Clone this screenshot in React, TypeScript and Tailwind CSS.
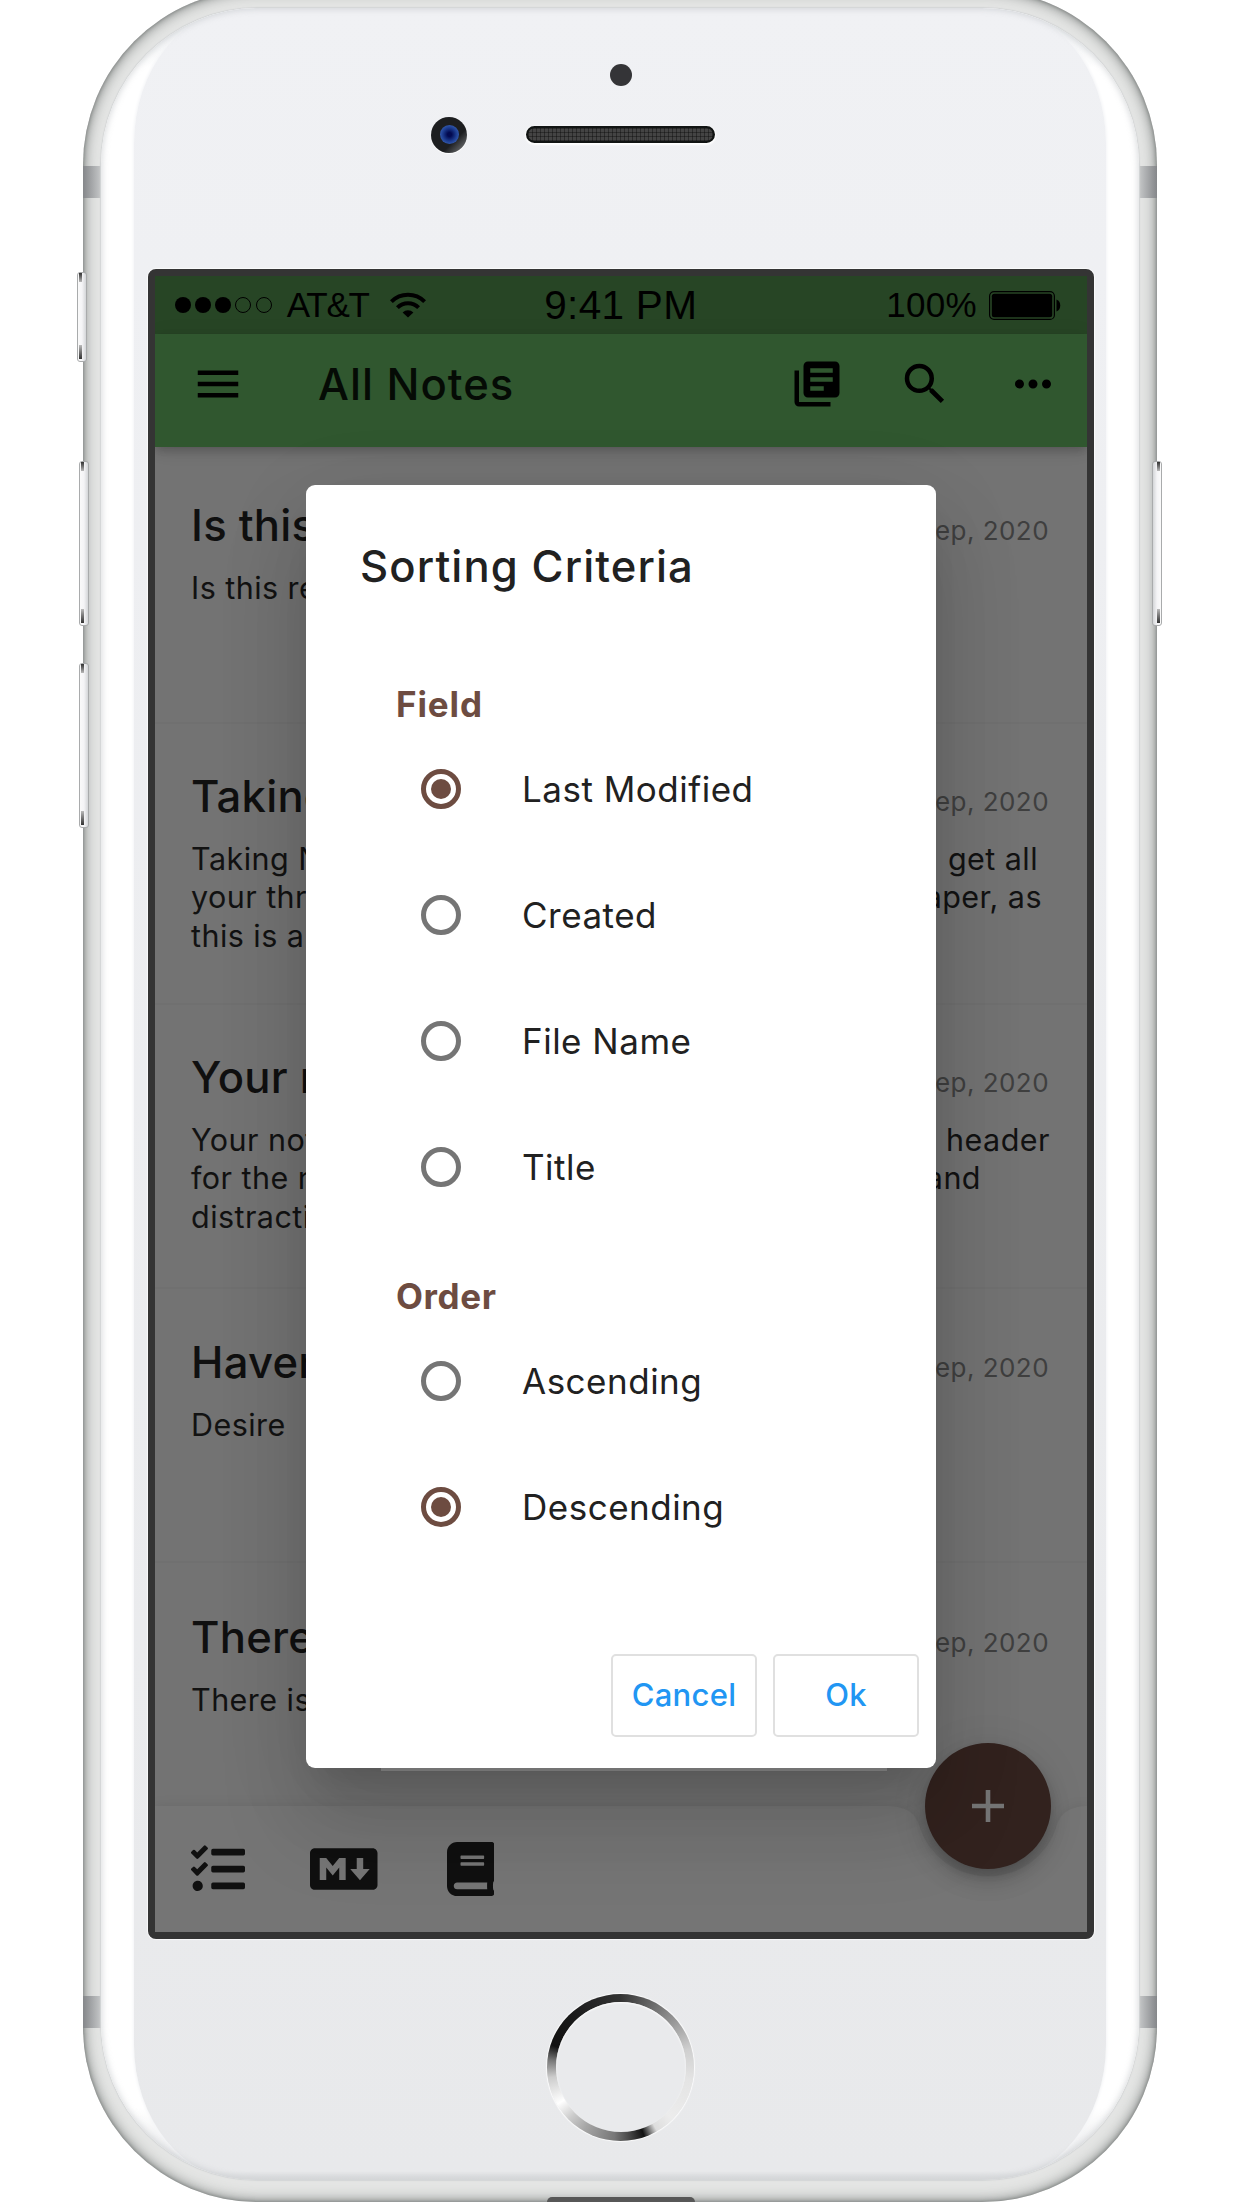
import React from "react";
import { FaBook, FaMarkdown, FaTasks } from "react-icons/fa";
import { MdLibraryBooks, MdMenu, MdMoreHoriz, MdSearch } from "react-icons/md";

type Line = { left: string; right?: string; pad?: string };
type Note = { title: string; lines: Line[]; box: string };

const notes: Note[] = [
  { title: "Is this real?", lines: [{ left: "Is this real?" }], box: "h-[275px] pt-[52px]" },
  {
    title: "Taking Notes",
    lines: [
      { left: "Taking Notes", right: "get all", pad: "pr-[12px]" },
      { left: "your thread", right: "paper, as", pad: "pr-[8px]" },
      { left: "this is a" },
    ],
    box: "h-[281px] border-t-2 border-[#707070] pt-[46px]",
  },
  {
    title: "Your notes",
    lines: [
      { left: "Your notes", right: "header", pad: "pr-0" },
      { left: "for the note", right: "and", pad: "pr-[69px]" },
      { left: "distraction" },
    ],
    box: "h-[284px] border-t-2 border-[#707070] pt-[46px]",
  },
  { title: "Haven", lines: [{ left: "Desire" }], box: "h-[274px] border-t-2 border-[#707070] pt-[47px]" },
  { title: "There is", lines: [{ left: "There is" }], box: "h-[245px] border-t-2 border-[#707070] pt-[48px]" },
];

function NoteRow({ note }: { note: Note }) {
  return (
    <div className={`${note.box} w-full shrink-0 pl-[36px] pr-[37px]`}>
      <div className="flex justify-between">
        <div className="text-[43.6px] leading-[54px] font-medium tracking-[0.25px] text-[#101010]">{note.title}</div>
        <div className="pt-[5px] pr-px text-[26px] leading-[54px] tracking-[0.45px] text-[#3f3f3f]">18 Sep, 2020</div>
      </div>
      <div className="mt-[11px] text-[30.5px] leading-[38.3px] tracking-[0.45px] text-[#121212]">
        {note.lines.map((l) => (
          <div key={l.left} className="flex justify-between">
            <span>{l.left}</span>
            {l.right && <span className={l.pad}>{l.right}</span>}
          </div>
        ))}
      </div>
    </div>
  );
}

function StatusBar() {
  return (
    <div className="flex h-[58px] shrink-0 items-center bg-[#274525] pl-[19.5px] pr-[26px] font-['Liberation_Sans',sans-serif] text-black">
      <div className="flex flex-1 items-center">
        <div className="flex gap-[4.3px]">
          <i className="size-4 rounded-full bg-black" />
          <i className="size-4 rounded-full bg-black" />
          <i className="size-4 rounded-full bg-black" />
          <i className="size-4 rounded-full border border-black" />
          <i className="size-4 rounded-full border border-black" />
        </div>
        <span className="ml-[15px] text-[35px] leading-[58px] tracking-[-1.2px]">AT&amp;T</span>
        <svg className="ml-[21px] h-[26px] w-[36px]" viewBox="0 0 36 26" fill="none" stroke="#000" strokeWidth="4">
          <path d="M1.4 9.6a23.5 23.5 0 0 1 33.2 0" />
          <path d="M7.4 15.6a15 15 0 0 1 21.2 0" />
          <path d="M18 25.6l-5.4-5.2a7.8 7.8 0 0 1 10.8 0z" fill="#000" stroke="none" />
        </svg>
      </div>
      <span className="relative left-[3px] text-[40.5px] leading-[58px] tracking-[0.3px]">9:41 PM</span>
      <div className="flex flex-1 items-center justify-end">
        <span className="text-[35px] leading-[58px] tracking-[0.3px]">100%</span>
        <svg className="ml-[12px] h-[29px] w-[72px]" viewBox="0 0 72 29">
          <rect x="0.6" y="0.6" width="64.8" height="27.8" rx="4.5" fill="none" stroke="#000" strokeWidth="1.2" />
          <rect x="2.8" y="2.8" width="60.4" height="23.4" rx="2.5" />
          <path d="M67.5 8.5c5 1.5 5 10.500 0 12z" />
        </svg>
      </div>
    </div>
  );
}

function Toolbar() {
  return (
    <div className="relative z-10 flex h-[113px] shrink-0 items-center bg-[#30572f] pb-[13px] pl-[36px] pr-[27px] shadow-[0_5px_10px_rgba(0,0,0,0.12),0_2px_22px_rgba(0,0,0,0.06),0_4px_8px_-2px_rgba(0,0,0,0.1)]">
      <MdMenu className="size-[54px] text-black" />
      <span className="ml-[73px] flex-1 pt-px text-[43.6px] leading-[54px] font-[450] tracking-[1px] text-[#050b05]">All Notes</span>
      <div className="flex gap-[54px] text-black">
        <MdLibraryBooks className="size-[54px]" />
        <MdSearch className="size-[54px]" />
        <MdMoreHoriz className="size-[54px]" />
      </div>
    </div>
  );
}

function BottomBar() {
  return (
    <div className="relative mt-auto h-[127px] shrink-0">
      <svg className="absolute inset-0 h-full w-full drop-shadow-[0_0_6px_rgba(0,0,0,0.08)]" viewBox="0 0 932 127" preserveAspectRatio="none">
        <path d="M0 1H733C752 2 760 8 764 20A72 72 0 0 0 902 20C906 8 914 2 932 1V127H0z" fill="#757575" />
      </svg>
      <div className="relative flex h-full items-center pl-[36px] text-[#101010]">
        <FaTasks className="size-[54px]" />
        <FaMarkdown className="ml-[65px] h-[54px] w-[67.500px]" />
        <FaBook className="ml-[69.500px] h-[54px] w-[47.250px]" />
      </div>
      <div className="absolute left-[770px] -top-[62px] flex size-[126px] items-center justify-center rounded-full bg-[#32221e] shadow-[0_7px_12px_-2px_rgba(0,0,0,0.2),0_13px_22px_rgba(0,0,0,0.14),0_2px_40px_rgba(0,0,0,0.08)]">
        <svg className="size-8" viewBox="0 0 32 32" stroke="#757575" strokeWidth="4.600">
          <path d="M16 0V32M0 16H32" />
        </svg>
      </div>
    </div>
  );
}

function RadioRow({ label, checked = false }: { label: string; checked?: boolean }) {
  return (
    <div className="flex h-[126px] items-center pl-[115px]">
      <span
        className={`flex size-[40px] items-center justify-center rounded-full border-[5px] ${checked ? "border-[#6d4c41]" : "border-[#757575]"}`}
      >
        {checked && <span className="size-[20px] rounded-full bg-[#6d4c41]" />}
      </span>
      <span className="ml-[61px] text-[35px] leading-[44px] tracking-[0.5px] text-[#212121]">{label}</span>
    </div>
  );
}

function SortDialog() {
  return (
    <div className="absolute left-[151px] top-[209px] z-20 h-[1283px] w-[630px] rounded-[9px] bg-white pt-[55px] shadow-[0_25px_34px_-16px_rgba(0,0,0,0.12),0_54px_86px_7px_rgba(0,0,0,0.12),0_20px_90px_6px_rgba(0,0,0,0.07)]">
      <h2 className="pl-[54px] text-[43.6px] leading-[54px] font-[450] tracking-[1.1px] text-[#212121]">Sorting Criteria</h2>
      <h3 className="mt-[88px] pl-[90px] text-[35px] leading-[44px] font-bold tracking-[0.9px] text-[#6d4c41]">Field</h3>
      <RadioRow label="Last Modified" checked />
      <RadioRow label="Created" />
      <RadioRow label="File Name" />
      <RadioRow label="Title" />
      <h3 className="mt-[44px] pl-[90px] text-[35px] leading-[44px] font-bold tracking-[0.6px] text-[#6d4c41]">Order</h3>
      <RadioRow label="Ascending" />
      <RadioRow label="Descending" checked />
      <div className="mt-[84px] flex justify-end gap-4 pr-[17px] text-[31px] font-medium tracking-[0.3px] text-[#2196f3]">
        <button className="h-[83px] w-[146px] rounded-[5px] border-2 border-[#e0e0e0]">Cancel</button>
        <button className="h-[83px] w-[146px] rounded-[5px] border-2 border-[#e0e0e0]">Ok</button>
      </div>
      <div className="absolute left-[75px] top-full h-[3px] w-[506px] bg-[#737373]" />
    </div>
  );
}

function Screen() {
  return (
    <div className="ml-[47px] mt-[116px] h-[1670px] w-[946px] shrink-0 rounded-[8px] border-[7px] border-[#343434] shadow-[0_0_1px_1px_rgba(255,255,255,0.7)]">
      <div className="relative flex h-full flex-col overflow-hidden bg-[#737373]">
        <StatusBar />
        <Toolbar />
        <div className="flex h-[1358px] shrink-0 flex-col overflow-hidden">
          {notes.map((n) => (
            <NoteRow key={n.title} note={n} />
          ))}
        </div>
        <BottomBar />
        <SortDialog />
      </div>
    </div>
  );
}

function SideButton({ place }: { place: string }) {
  return (
    <div
      className={`absolute rounded-[3px] border border-[#a9abac] bg-linear-to-r from-[#fafafa] via-[#f4f4f6] to-[#d4d6d8] ${place}`}
    >
      <div className="mx-[1px] h-[9px] w-[3px] bg-linear-to-b from-[#333] to-[#bbb]" />
      <div className="absolute bottom-[2px] left-[1px] h-[14px] w-[3px] bg-linear-to-b from-[#bbb] to-[#333]" />
    </div>
  );
}

export default function App() {
  return (
    <div className="relative h-[2208px] w-[1242px] overflow-hidden bg-white font-['Inter',sans-serif]">
      <div className="relative -mt-[10px] ml-[83px] h-[2212px] w-[1074px] overflow-hidden rounded-[175px] bg-[#e4e5e4] px-[18px] pb-[22px] pt-[18px] shadow-[inset_0_0_4px_rgba(70,75,73,0.6),inset_0_0_12px_3px_rgba(80,85,83,0.5)]">
        <div className="absolute left-0 top-[176px] h-[32px] w-[18px] bg-linear-to-r from-[#85878a] to-[#c6c8c9]" />
        <div className="absolute right-0 top-[176px] h-[32px] w-[18px] bg-linear-to-l from-[#85878a] to-[#c6c8c9]" />
        <div className="absolute left-0 top-[2006px] h-[32px] w-[18px] bg-linear-to-r from-[#85878a] to-[#c6c8c9]" />
        <div className="absolute right-0 top-[2006px] h-[32px] w-[18px] bg-linear-to-l from-[#85878a] to-[#c6c8c9]" />

        <div className="relative h-full w-full overflow-hidden rounded-[157px] bg-[linear-gradient(to_bottom,#eceef0_0px,#eff1f3_22px,#ffffff_60px,#ffffff_2100px,#e8e9eb_2155px,#d6d8da_2172px)] shadow-[0_0_1px_1px_#d3d5d6]">
          <div className="absolute inset-x-[33px] inset-y-0 rounded-[110px/135px] bg-linear-to-b from-[#f0f1f4] to-[#e8e9eb] shadow-[0_0_3px_1px_#f4f5f7]" />
          <div className="absolute inset-0 rounded-[157px] shadow-[inset_0_0_6px_1px_rgba(170,175,180,0.45)]" />
          <div className="absolute inset-x-[90px] bottom-0 h-[9px] bg-linear-to-b from-transparent to-[#d4d6d8]" />

          <div className="relative flex h-full flex-col">
            <div className="ml-[509px] mt-[56px] size-[22px] shrink-0 rounded-full bg-[#343437]" />
            <div className="ml-[330px] mt-[30px] flex h-[37px] shrink-0 items-center">
              <div className="flex size-[36px] items-center justify-center rounded-full bg-[linear-gradient(135deg,#1d1e20_65%,#77797b_95%)] shadow-[0_1px_1px_#fff]">
                <div className="size-[19px] rounded-full bg-[radial-gradient(circle_at_50%_50%,#020a50_15%,#1c3c90_50%,#3a62b4_80%)]" />
              </div>
              <div className="ml-[59px] h-[17px] w-[189px] rounded-full border-2 border-[#111413] bg-[#444] bg-[repeating-linear-gradient(90deg,rgba(0,0,0,0.35)_0_1px,transparent_1px_4px),repeating-linear-gradient(0deg,rgba(0,0,0,0.35)_0_1px,transparent_1px_4px)] shadow-[0_1px_2px_1px_#fff]" />
            </div>
            <Screen />
            <div className="ml-[446px] mt-[54.500px] size-[147px] shrink-0 rounded-full bg-[conic-gradient(#333_0deg,#666_25deg,#999_50deg,#cfcfcf_75deg,#e4e4e4_100deg,#ececec_135deg,#ddd_150deg,#111_161deg,#444_172deg,#777_185deg,#a5a5a5_210deg,#ccc_225deg,#fff_240deg,#ccc_262deg,#777_276deg,#111_288deg,#1a1a1a_318deg,#333_360deg)] p-[8.500px] shadow-[0_0_1px_1px_rgba(255,255,255,0.8)]">
              <div className="size-full rounded-full bg-[#e9eaec] shadow-[inset_0_1px_2px_#fff]" />
            </div>
          </div>
        </div>
        <div className="absolute bottom-0 left-[464px] h-[5.500px] w-[148px] rounded-t-[8px] bg-[#575757]" />
      </div>

      <SideButton place="left-[77px] top-[272px] h-[90px] w-[10px]" />
      <SideButton place="left-[79px] top-[461px] h-[165px] w-[10px]" />
      <SideButton place="left-[79px] top-[663px] h-[165px] w-[10px]" />
      <SideButton place="left-[1152px] top-[461px] h-[165px] w-[10px] -scale-x-100" />
    </div>
  );
}
